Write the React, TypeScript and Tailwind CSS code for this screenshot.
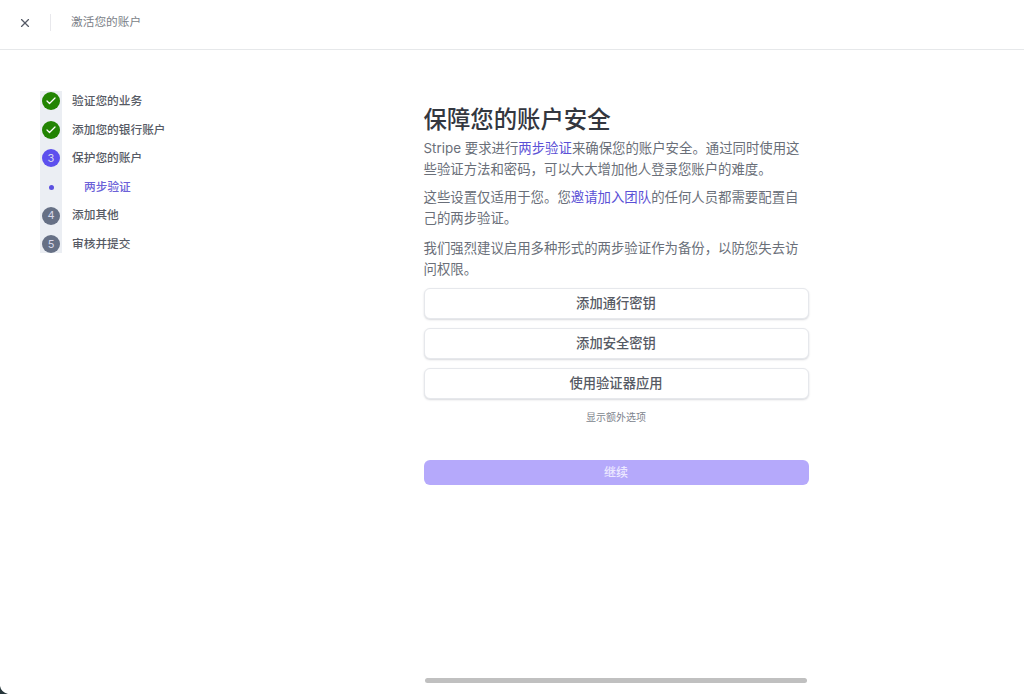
import React from 'react';
import { X, Check } from 'lucide-react';

const font = '[font-family:Inter,"Noto_Sans_CJK_SC",sans-serif]';

type Step = { label: string; state: 'done' | 'current' | 'todo' | 'sub'; num?: number };

const steps: Step[] = [
  { label: '验证您的业务', state: 'done' },
  { label: '添加您的银行账户', state: 'done' },
  { label: '保护您的账户', state: 'current', num: 3 },
  { label: '两步验证', state: 'sub' },
  { label: '添加其他', state: 'todo', num: 4 },
  { label: '审核并提交', state: 'todo', num: 5 },
];

function StepMark({ step }: { step: Step }) {
  if (step.state === 'done') {
    return (
      <span className="flex h-[18px] w-[18px] items-center justify-center rounded-full bg-[#228403] text-white">
        <Check className="h-3 w-3" strokeWidth={2.5} />
      </span>
    );
  }
  if (step.state === 'sub') {
    return <span className="h-[5px] w-[5px] rounded-full bg-[#5b50e0]" />;
  }
  return (
    <span
      className={
        'flex h-[18px] w-[18px] items-center justify-center rounded-full text-[11px] text-[#d8d8ea] ' +
        (step.state === 'current' ? 'bg-[#5d50ee]' : 'bg-[#667085]')
      }
    >
      {step.num}
    </span>
  );
}

function Sidebar() {
  return (
    <div className="relative ml-10 w-[260px] shrink-0 pt-[37px]">
      <div className="absolute left-0 top-[41px] h-[162px] w-[22px] bg-[#ebeef3]" />
      <ul className="relative">
        {steps.map((step) => (
          <li key={step.label} className="flex h-[28.6px] items-center">
            <span className="flex w-[22px] justify-center">
              <StepMark step={step} />
            </span>
            <span
              className={
                step.state === 'sub'
                  ? 'ml-[22px] mt-px text-[11.7px] font-medium text-[#6c61d8]'
                  : 'ml-[10px] mt-px text-[11.7px] font-medium text-[#565a64]'
              }
            >
              {step.label}
            </span>
          </li>
        ))}
      </ul>
    </div>
  );
}

function OptionButton({ children }: { children: React.ReactNode }) {
  return (
    <button className="h-[31px] w-full rounded-md border border-[#e6e8ec] bg-white text-[13.3px] font-medium text-[#565a64] shadow-[0_1px_2px_rgba(60,66,87,0.2)]">
      {children}
    </button>
  );
}

export default function App() {
  return (
    <div className={`relative flex h-[694px] w-[1024px] flex-col overflow-hidden bg-white ${font}`}>
      <header className="flex h-[50px] shrink-0 items-center border-b border-[#e6e8ea] pb-[4px]">
        <X className="ml-[18px] h-[14px] w-[14px] text-[#555a66]" strokeWidth={2} />
        <span className="ml-[18px] h-[17px] w-px bg-[#e8e8ec]" />
        <span className="ml-5 text-[11.7px] text-[#7b7f88]">激活您的账户</span>
      </header>

      <div className="flex flex-1">
        <Sidebar />
        <main className="ml-[123.5px] flex w-[385px] flex-col pt-[54px]">
          <h1 className="text-[23.4px] font-medium leading-[32px] text-[#33373f]">保障您的账户安全</h1>
          <div className="mt-[2px] text-[13.4px] leading-[21px] text-[#6a6f79]">
            <p>
              Stripe 要求进行<span className="text-[#5b50d6]">两步验证</span>来确保您的账户安全。通过同时使用这些验证方法和密码，可以大大增加他人登录您账户的难度。
            </p>
            <p className="mt-[7px]">
              这些设置仅适用于您。您<span className="text-[#5b50d6]">邀请加入团队</span>的任何人员都需要配置自己的两步验证。
            </p>
            <p className="mt-[9px]">我们强烈建议启用多种形式的两步验证作为备份，以防您失去访问权限。</p>
          </div>
          <div className="mt-[8px] flex flex-col gap-[9px]">
            <OptionButton>添加通行密钥</OptionButton>
            <OptionButton>添加安全密钥</OptionButton>
            <OptionButton>使用验证器应用</OptionButton>
          </div>
          <p className="mt-[11px] text-center text-[10px] leading-[14px] text-[#80848d]">显示额外选项</p>
          <button className="mt-9 h-[25px] w-full rounded-md bg-[#b5a9fb] text-[12px] font-medium text-[#ece8ff]">
            继续
          </button>
        </main>
      </div>

      {/* scrollbar thumb and the window's dark corner */}
      <div className="absolute left-[425px] top-[678px] h-[5px] w-[382px] rounded-full bg-[#c0c0c0]" />
      <svg className="absolute bottom-0 left-0 h-2 w-2" viewBox="0 0 8 8">
        <path d="M0 0 Q1 6 8 8 L0 8 Z" fill="#26363a" />
      </svg>
    </div>
  );
}
